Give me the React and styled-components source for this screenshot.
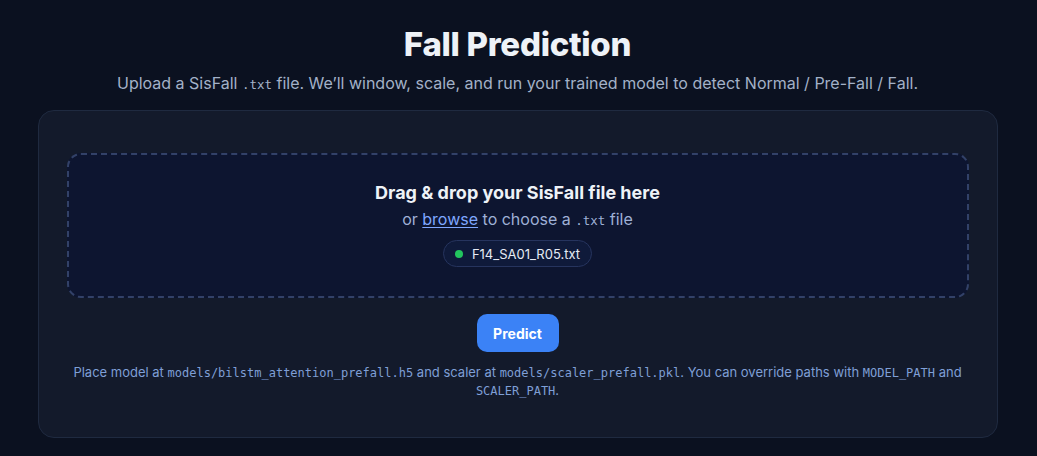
import React from "react";
import styled, { createGlobalStyle } from "styled-components";

const Global = createGlobalStyle`
  html, body { margin: 0; padding: 0; }
  body {
    background: #0b1120;
    font-family: Inter, "Noto Sans", sans-serif;
    color: #e5e7eb;
    min-height: 456px;
  }
`;

const Page = styled.main`
  box-sizing: border-box;
  max-width: 962px;
  margin: 0 auto;
  padding: 24px 2px 18px 0;
`;

const Header = styled.header`
  text-align: center;
  margin-bottom: 13px;
`;

const Title = styled.h1`
  margin: 0;
  font-size: 33px;
  line-height: 40px;
  font-weight: 800;
  color: #eef2f7;
  letter-spacing: -0.3px;
`;

const Subtitle = styled.p`
  margin: 7px 0 0;
  font-size: 16px;
  line-height: 24px;
  color: #a3b1c8;
`;

const Code = styled.code`
  font-family: "DejaVu Sans Mono", "Liberation Mono", monospace;
  font-size: ${(p) => p.$size || "0.78em"};
`;

const Card = styled.section`
  background: #131a2b;
  border: 1px solid #1f2a40;
  border-radius: 16px;
  padding: 42px 28px 37px;
  display: flex;
  flex-direction: column;
  align-items: center;
`;

const Dropzone = styled.div`
  align-self: stretch;
  background: #0d1530;
  border: 2px dashed #324168;
  border-radius: 14px;
  padding: 26px 20px 29px;
  display: flex;
  flex-direction: column;
  align-items: center;
`;

const DropTitle = styled.div`
  font-size: 18px;
  line-height: 24px;
  font-weight: 700;
  color: #eef2f7;
`;

const DropSub = styled.div`
  margin-top: 2px;
  font-size: 16px;
  line-height: 24px;
  color: #9fb0d6;
`;

const Browse = styled.a`
  color: #7fa7ff;
  text-decoration: underline;
  text-underline-offset: 2px;
  cursor: pointer;
`;

const Chip = styled.div`
  margin-top: 7px;
  display: inline-flex;
  align-items: center;
  gap: 9px;
  height: 27px;
  box-sizing: border-box;
  padding: 0 11px;
  border-radius: 999px;
  background: #0f1a3a;
  border: 1px solid #26345e;
  font-size: 13px;
  color: #e6ebf5;
`;

const Dot = styled.span`
  width: 8px;
  height: 8px;
  border-radius: 50%;
  background: #22c55e;
`;

const Button = styled.button`
  margin-top: 16px;
  width: 82px;
  height: 38px;
  border: none;
  border-radius: 10px;
  background: #3b82f6;
  color: #fff;
  font-family: Inter, "Noto Sans", sans-serif;
  font-size: 14px;
  font-weight: 700;
  cursor: pointer;
`;

const Note = styled.p`
  margin: 12px 0 0;
  font-size: 13px;
  line-height: 17px;
  color: #7f9fd6;
  text-align: center;
  max-width: 900px;
`;

export default function App() {
  return (
    <>
      <Global />
      <Page>
        <Header>
          <Title>Fall Prediction</Title>
          <Subtitle>
            Upload a SisFall <Code>.txt</Code> file. We’ll window, scale, and run your
            trained model to detect Normal / Pre-Fall / Fall.
          </Subtitle>
        </Header>
        <Card>
          <Dropzone>
            <DropTitle>Drag &amp; drop your SisFall file here</DropTitle>
            <DropSub>
              or <Browse>browse</Browse> to choose a <Code>.txt</Code> file
            </DropSub>
            <Chip>
              <Dot />
              F14_SA01_R05.txt
            </Chip>
          </Dropzone>
          <Button>Predict</Button>
          <Note>
            Place model at <Code $size="12px">models/bilstm_attention_prefall.h5</Code> and
            scaler at <Code $size="12px">models/scaler_prefall.pkl</Code>. You can override
            paths with <Code $size="12px">MODEL_PATH</Code> and{" "}
            <Code $size="12px">SCALER_PATH</Code>.
          </Note>
        </Card>
      </Page>
    </>
  );
}
